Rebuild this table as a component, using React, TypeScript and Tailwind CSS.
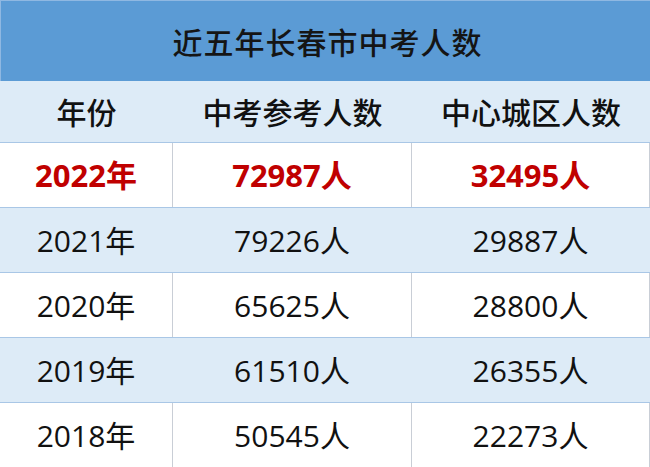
const rows = [
  { year: '2021年', total: '79226人', city: '29887人', shade: true },
  { year: '2020年', total: '65625人', city: '28800人', shade: false },
  { year: '2019年', total: '61510人', city: '26355人', shade: true },
  { year: '2018年', total: '50545人', city: '22273人', shade: false },
]

const cjk = "font-['Noto_Sans_CJK_SC',sans-serif]"
const num = "font-['Open_Sans','Noto_Sans_CJK_SC',sans-serif]"

export default function App() {
  return (
    <div className="flex h-[467px] w-[650px] flex-col overflow-hidden bg-white">
      <div
        className={`flex h-[81px] shrink-0 items-center justify-center border-t border-l border-[#8fb8e2] bg-[#5b9bd5] pl-[4px] text-[30px] font-medium tracking-[1px] text-[#151515] ${cjk}`}
      >
        近五年长春市中考人数
      </div>

      <div
        className={`grid h-[62px] shrink-0 grid-cols-[173px_239px_1fr] items-center border-b border-[#a9c7e6] bg-[#ddebf7] text-[30px] font-medium text-[#111] ${cjk}`}
      >
        <div className="text-center">年份</div>
        <div className="text-center">中考参考人数</div>
        <div className="text-center">中心城区人数</div>
      </div>

      <div
        className={`grid h-[65px] shrink-0 grid-cols-[173px_239px_1fr] border-b border-[#a9c7e6] bg-white text-[31px] font-bold text-[#c00000] ${num}`}
      >
        <div className="flex items-center justify-center border-r border-[#c9ced6]">2022年</div>
        <div className="flex items-center justify-center border-r border-[#c9ced6]">72987人</div>
        <div className="flex items-center justify-center border-r border-[#c9ced6]">32495人</div>
      </div>

      {rows.map((r) => (
        <div
          key={r.year}
          className={`grid h-[65px] shrink-0 grid-cols-[173px_239px_1fr] border-b border-[#a9c7e6] text-[30px] text-[#111] ${num} ${
            r.shade ? 'bg-[#ddebf7]' : 'bg-white'
          }`}
        >
          <div className={`flex items-center justify-center border-r ${r.shade ? 'border-transparent' : 'border-[#c9ced6]'}`}>
            {r.year}
          </div>
          <div className={`flex items-center justify-center border-r ${r.shade ? 'border-transparent' : 'border-[#c9ced6]'}`}>
            {r.total}
          </div>
          <div className={`flex items-center justify-center border-r ${r.shade ? 'border-transparent' : 'border-[#c9ced6]'}`}>
            {r.city}
          </div>
        </div>
      ))}
    </div>
  )
}
